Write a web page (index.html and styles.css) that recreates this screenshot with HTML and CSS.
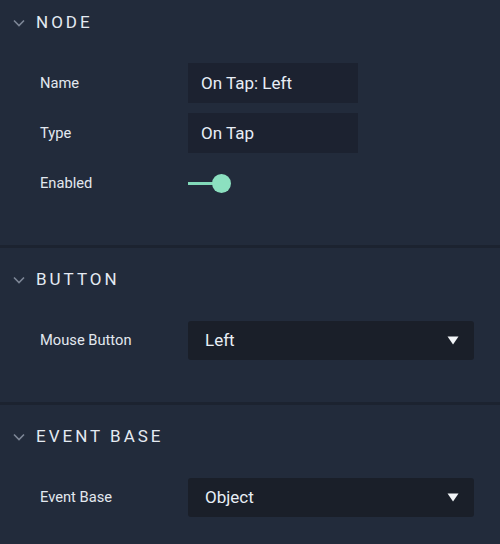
FILE: index.html
```html
<!DOCTYPE html>
<html>
<head>
<meta charset="utf-8">
<link rel="stylesheet" href="styles.css">
</head>
<body>
<div class="panel">
  <section class="section">
    <div class="header">
      <svg class="chev" width="12" height="8" viewBox="0 0 12 8"><path d="M1 1.5 L6 6.5 L11 1.5" fill="none" stroke="#7d8696" stroke-width="1.6"/></svg>
      <span class="title">NODE</span>
    </div>
    <div class="rows">
      <div class="row"><span class="label">Name</span><div class="input">On Tap: Left</div></div>
      <div class="row"><span class="label">Type</span><div class="input">On Tap</div></div>
      <div class="row"><span class="label">Enabled</span><div class="toggle"><span class="track"></span><span class="knob"></span></div></div>
    </div>
  </section>
  <section class="section">
    <div class="header">
      <svg class="chev" width="12" height="8" viewBox="0 0 12 8"><path d="M1 1.5 L6 6.5 L11 1.5" fill="none" stroke="#7d8696" stroke-width="1.6"/></svg>
      <span class="title">BUTTON</span>
    </div>
    <div class="rows">
      <div class="row"><span class="label">Mouse Button</span><div class="select"><span>Left</span><svg width="12" height="9" viewBox="0 0 12 9"><path d="M0.5 0.5 L11.5 0.5 L6 8.5 Z" fill="#f2f5f8"/></svg></div></div>
    </div>
  </section>
  <section class="section">
    <div class="header">
      <svg class="chev" width="12" height="8" viewBox="0 0 12 8"><path d="M1 1.5 L6 6.5 L11 1.5" fill="none" stroke="#7d8696" stroke-width="1.6"/></svg>
      <span class="title">EVENT BASE</span>
    </div>
    <div class="rows">
      <div class="row"><span class="label">Event Base</span><div class="select"><span>Object</span><svg width="12" height="9" viewBox="0 0 12 9"><path d="M0.5 0.5 L11.5 0.5 L6 8.5 Z" fill="#f2f5f8"/></svg></div></div>
    </div>
  </section>
</div>
</body>
</html>
```

FILE: styles.css
```css
html, body {
  margin: 0;
  padding: 0;
  background: #222b3b;
}
body {
  font-family: Roboto, "Liberation Sans", sans-serif;
  color: #e3e9f1;
  width: 500px;
  height: 544px;
  overflow: hidden;
}
.panel {
  display: flex;
  flex-direction: column;
}
.section {
  padding: 0 0 42px;
}
.section + .section {
  border-top: 3px solid #1c2330;
  padding-top: 9px;
}
.header {
  height: 44px;
  display: flex;
  align-items: center;
  padding-left: 13px;
}
.chev {
  display: block;
  margin-right: 11px;
  margin-top: 1px;
}
.title {
  font-size: 17px;
  letter-spacing: 3px;
  color: #e4eaf2;
  font-weight: 400;
}
.rows {
  padding-top: 19px;
  display: flex;
  flex-direction: column;
  gap: 10px;
}
.row {
  display: grid;
  grid-template-columns: 148px auto;
  align-items: center;
  padding-left: 40px;
  height: 40px;
}
.label {
  font-size: 14.7px;
  color: #e2e8ef;
}
.input {
  width: 170px;
  height: 40px;
  box-sizing: border-box;
  background: #1c2230;
  padding-left: 13px;
  display: flex;
  align-items: center;
  font-size: 17px;
  color: #e8eef6;
}
.select {
  width: 286px;
  height: 39px;
  box-sizing: border-box;
  background: #1a1f29;
  border-radius: 3px;
  padding: 0 15px 0 17px;
  display: flex;
  align-items: center;
  justify-content: space-between;
  font-size: 17px;
  color: #e8eef6;
}
.select svg {
  display: block;
}
.toggle {
  position: relative;
  width: 44px;
  height: 20px;
}
.track {
  position: absolute;
  left: 0;
  top: 9px;
  width: 28px;
  height: 3px;
  background: #82d9b9;
}
.knob {
  position: absolute;
  left: 24px;
  top: 1px;
  width: 19px;
  height: 19px;
  border-radius: 50%;
  background: #8ce0c0;
}
```
